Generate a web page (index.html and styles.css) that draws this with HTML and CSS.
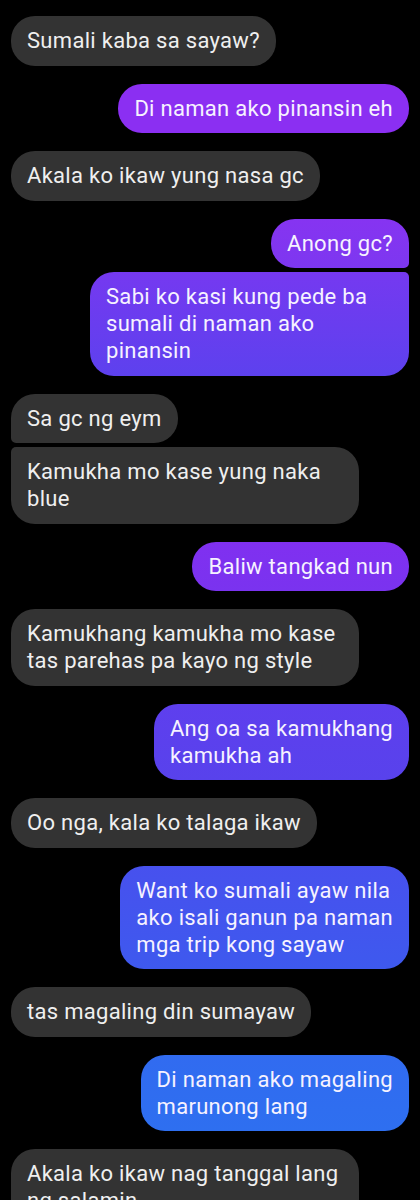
FILE: index.html
```html
<!DOCTYPE html>
<html>
<head>
<meta charset="utf-8">
<link rel="stylesheet" href="styles.css">
</head>
<body>
<div class="chat">
  <div class="msg in">Sumali kaba sa sayaw?</div>
  <div class="msg out t1">Di naman ako pinansin eh</div>
  <div class="msg in">Akala ko ikaw yung nasa gc</div>
  <div class="msg out t2 first">Anong gc?</div>
  <div class="msg out t3 last grouped sabi">Sabi ko kasi kung pede ba<br>sumali di naman ako<br>pinansin</div>
  <div class="msg in first">Sa gc ng eym</div>
  <div class="msg in last grouped wide">Kamukha mo kase yung naka<br>blue</div>
  <div class="msg out t4">Baliw tangkad nun</div>
  <div class="msg in wide">Kamukhang kamukha mo kase<br>tas parehas pa kayo ng style</div>
  <div class="msg out t5">Ang oa sa kamukhang<br>kamukha ah</div>
  <div class="msg in">Oo nga, kala ko talaga ikaw</div>
  <div class="msg out t6">Want ko sumali ayaw nila<br>ako isali ganun pa naman<br>mga trip kong sayaw</div>
  <div class="msg in">tas magaling din sumayaw</div>
  <div class="msg out t7">Di naman ako magaling<br>marunong lang</div>
  <div class="msg in wide">Akala ko ikaw nag tanggal lang<br>ng salamin</div>
</div>
</body>
</html>
```

FILE: styles.css
```css
html, body {
  margin: 0;
  padding: 0;
  background: #000;
}

body {
  font-family: Roboto, "Liberation Sans", Arial, sans-serif;
  height: 1200px;
  overflow: hidden;
}

.chat {
  display: flex;
  flex-direction: column;
  padding: 16px 11px 0 11px;
  gap: 18px;
}

.msg {
  box-sizing: border-box;
  font-size: 22px;
  letter-spacing: 0.3px;
  line-height: 27px;
  padding: 11.25px 16px;
  border-radius: 24px;
  white-space: nowrap;
}

.in {
  align-self: flex-start;
  background: #333333;
  color: #efefef;
}

.out {
  align-self: flex-end;
  color: #f6f2ff;
}

.wide {
  width: 348px;
}

.sabi {
  width: 319px;
}

.grouped {
  margin-top: -14px;
}

.in.first { border-bottom-left-radius: 5px; }
.in.last { border-top-left-radius: 5px; }
.out.first { border-bottom-right-radius: 5px; }
.out.last { border-top-right-radius: 5px; }

.t1 { background: #8b2ff2; }
.t2 { background: linear-gradient(180deg, #8634f1, #7d37f0); }
.t3 { background: linear-gradient(180deg, #7539f0, #5d41ee); }
.t4 { background: linear-gradient(180deg, #8030f0, #7a33ef); }
.t5 { background: linear-gradient(180deg, #5e3fee, #5842ec); }
.t6 { background: linear-gradient(180deg, #4751ee, #3e59ee); }
.t7 { background: linear-gradient(180deg, #316bf0, #2e6ff0); }
```
